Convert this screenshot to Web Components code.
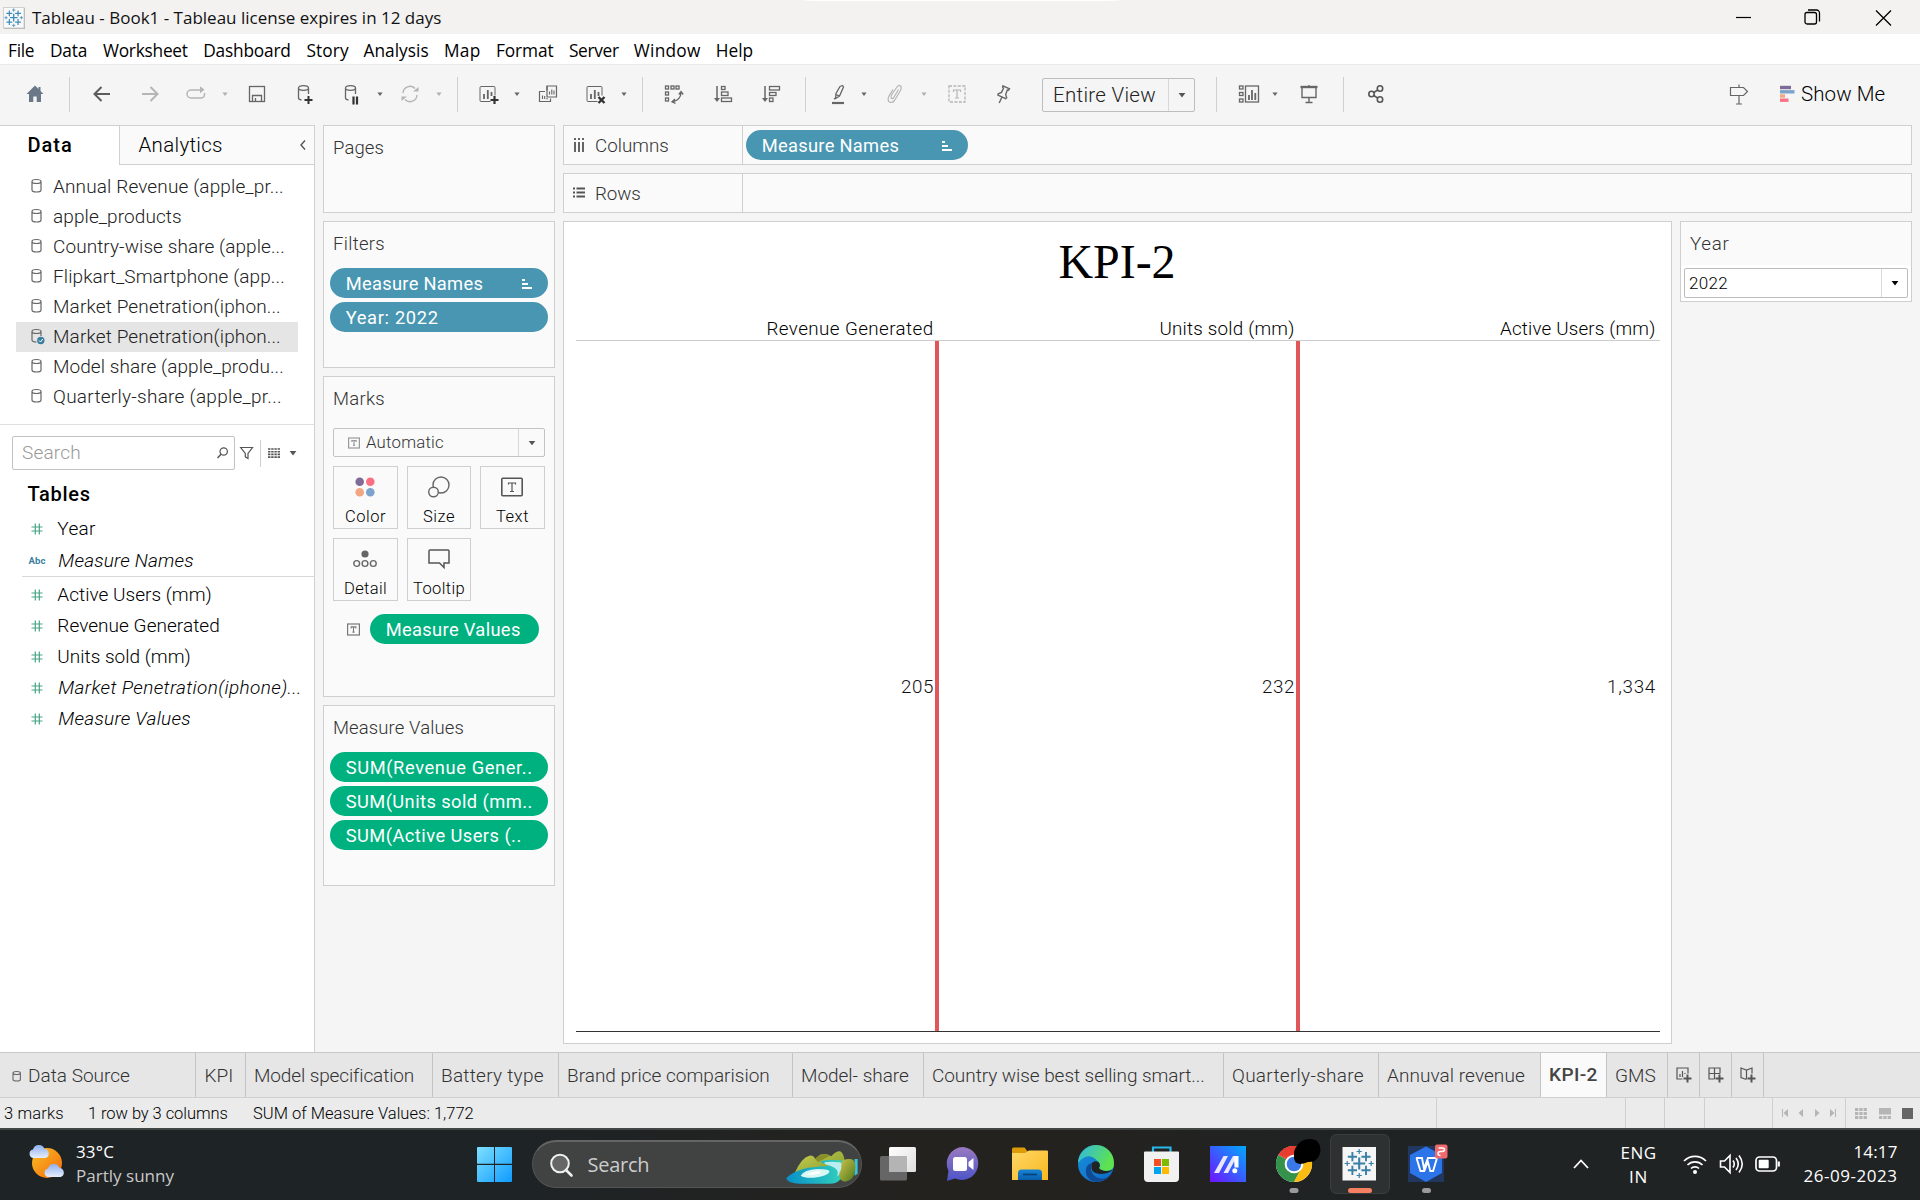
<!DOCTYPE html>
<html lang="en">
<head>
<meta charset="utf-8">
<title>Tableau - Book1</title>
<style>
html,body{margin:0;padding:0;width:1920px;height:1200px;overflow:hidden;background:#f5f5f5}
</style>
</head>
<body>
<tableau-app></tableau-app>
<script>
const texts = new Set();

/* Text run whose letter spacing is tuned so that it fills a given width. */
class UiText extends HTMLElement {
  constructor() {
    super();
    this.attachShadow({mode: 'open'}).innerHTML =
      '<style>:host{display:block;white-space:nowrap;line-height:1.2}span{display:inline-block;white-space:pre}</style><span><slot></slot></span>';
  }
  connectedCallback() { texts.add(this); }
  fit() {
    const w = parseFloat(this.getAttribute('w'));
    if (!w) return;
    this.style.width = w + 'px';
    const span = this.shadowRoot.querySelector('span');
    const n = this.textContent.length;
    const natural = span.getBoundingClientRect().width;
    this.style.letterSpacing = ((w + 1 - natural) / n).toFixed(3) + 'px';
  }
}
customElements.define('ui-text', UiText);

function define(name, css, html) {
  const tpl = document.createElement('template');
  tpl.innerHTML = '<style>*{box-sizing:border-box}:host{display:block;box-sizing:border-box}.row{display:flex;align-items:center}.row>*{flex:none}svg{display:block;overflow:visible}' + css + '</style>' + html;
  customElements.define(name, class extends HTMLElement {
    constructor() {
      super();
      this.attachShadow({mode: 'open'}).appendChild(tpl.content.cloneNode(true));
    }
  });
}

/* Row helpers: each item is [left, width, html]; the gap before it becomes its margin. */
const row = (items, start = 0) => {
  let cur = start;
  return items.map(([x, w, h, st = '']) => {
    const m = x - cur; cur = x + w;
    return `<div style="margin-left:${m.toFixed(2)}px;width:${w}px;${st}">${h}</div>`;
  }).join('');
};
const t = (x, x2, s, st = '') => [x - .5, x2 - x + .3, `<ui-text w="${(x2 - x + .3).toFixed(1)}">${s}</ui-text>`, st];
const svg = (w, h, body, extra = '') => `<svg width="${w}" height="${h}" viewBox="0 0 ${w} ${h}" fill="none" ${extra}>${body}</svg>`;
const ic = (cx, body, color = '#666', w = 24, st = '') => [cx - w / 2, w, svg(w, 24, body, `stroke="${color}"`), st];
const caret = (cx, c = '#666', s = 2.6, st = '') => [cx - 4, 8, svg(8, 8, `<path d="M${4 - s} ${4 - s / 2 - .3}h${2 * s}l${-s} ${s + 1}z" fill="${c}"/>`), st];
const sep = (x, h = 35, c = '#cfcfcf') => [x, 1, `<div style="height:${h}px;background:${c}"></div>`];

const plus = (x, y, r, w, c) => `<path d="M${x - r} ${y}h${2 * r}M${x} ${y - r}v${2 * r}" stroke="${c}" stroke-width="${w}"/>`;
const tableau = (cx, cy, k, c) => plus(cx, cy, 6 * k, 2.1 * k, c) +
  [[-1, -1], [1, -1], [-1, 1], [1, 1]].map(([a, b]) => plus(cx + a * 6.8 * k, cy + b * 6.8 * k, 4.6 * k, 1.9 * k, c)).join('') +
  [[0, -1], [0, 1], [-1, 0], [1, 0]].map(([a, b]) => plus(cx + a * 12 * k, cy + b * 12 * k, 2.6 * k, 1.2 * k, c)).join('');

/* ---------- title bar and menu ---------- */
define('title-bar', `:host{height:34px;background:linear-gradient(90deg,transparent 800px,#fff 812px,#fff 1110px,transparent 1125px) 0 0/100% 1px no-repeat,#f3f2f1;font:17px "Open Sans",sans-serif;color:#111}.row{height:34px;padding-top:1px}`,
  `<div class="row">` + row([
    [3, 22, svg(22, 22, `<rect x="1" y="1" width="21" height="21" fill="#aaa" stroke="none"/><rect x=".5" y=".5" width="20.5" height="20.5" fill="#fafafa" stroke="#d0d0d0"/>` + tableau(10.7, 10.7, .64, '#3d8cba'))],
    t(32.5, 440.5, 'Tableau - Book1 - Tableau license expires in 12 days', 'padding-top:1px'),
    [1735, 17, svg(17, 24, '<path d="M1 11.5h15" stroke="#000" stroke-width="1.2"/>')],
    [1804, 17, svg(17, 24, '<rect x="1" y="6.5" width="11.5" height="11.5" rx="2" stroke="#000" stroke-width="1.3"/><path d="M4 4h8.5a3 3 0 0 1 3 3v8.5" stroke="#000" stroke-width="1.3"/>')],
    [1875, 17, svg(17, 24, '<path d="M1 4.5l15 15M16 4.5l-15 15" stroke="#000" stroke-width="1.3"/>')],
  ]) + `</div>`);

define('menu-bar', `:host{height:30px;background:#fff;font:17.3px "Open Sans",sans-serif;color:#000}.row{height:35px}`,
  `<div class="row">` + row([
    t(8.5, 33.5, 'File'), t(50.5, 86.5, 'Data'), t(103.5, 187, 'Worksheet'), t(203.7, 290, 'Dashboard'), t(307, 348, 'Story'),
    t(364, 428, 'Analysis'), t(444.5, 480, 'Map'), t(496.5, 553, 'Format'), t(569.5, 618, 'Server'), t(634.5, 700, 'Window'), t(716.500, 752.500, 'Help')
  ]) + `</div>`);

/* ---------- toolbar ---------- */
const dbase = '<path d="M6.5 6v10q0 1.6 3 2M16.5 6v6M6.5 6q0-2.3 5-2.3t5 2.3-5 2.3-5-2.3z"/>';
const sheetBars = '<path d="M14.5 19.5h-9.500a1 1 0 0 1-1-1v-13a1 1 0 0 1 1-1h13a1 1 0 0 1 1 1v8"/><path d="M8 17v-5M11.800 17v-9M15.500 14v-4" stroke-width="1.8"/>';
define('tool-bar', `:host{height:61px;background:#f5f5f5;border-top:1px solid #e9e9e9;font:300 20.5px Roboto,sans-serif;color:#222}.row{height:58px}.sel{display:flex;height:34px;margin-top:1px;border:1px solid #bdbdbd;border-radius:2px;align-items:center}.sel>*{flex:none}`,
  `<div class="row">` + row([
    ic(35, '<path d="M12 3.500L3.500 12H6v8h4.300v-5.500h3.400V20H18v-8h2.500l-3-3V5h-2v2z" fill="#6b7888" stroke="none"/>'),
    sep(69),
    ic(102, '<path d="M20 12H5M11.500 5L4.500 12l7 7" stroke-width="2"/>', '#5c5c5c'),
    ic(150, '<path d="M4 12h15M12.500 5l7 7-7 7" stroke-width="2"/>', '#b5b5b5'),
    ic(196, '<path d="M15 8H7a4 4 0 0 0 0 8h10a3.500 3.500 0 0 0 3.500-3.500v-1.500M14 8h4" stroke-width="1.500"/><path d="M16 4.300v7l4.500-3.500z" fill="#b5b5b5" stroke="none"/>', '#b5b5b5'),
    caret(225, '#b0b0b0'),
    ic(257, '<rect x="4.500" y="4.500" width="15" height="15" stroke-width="1.300"/><path d="M7.500 19.500v-6h9v6M10.500 19v-3" stroke-width="1.300"/>'),
    ic(304, '<g stroke-width="1.300">' + dbase + '</g><path d="M16.500 14v8M12.500 18h8" stroke="#333" stroke-width="2"/>'),
    ic(351, '<g stroke-width="1.300">' + dbase + '</g><path d="M14.500 14.500v8M18 14.500v8" stroke="#333" stroke-width="2.200"/>'),
    caret(380),
    ic(409.5, '<path d="M5 11a7 7 0 0 1 12-4.500M19 13a7 7 0 0 1-12 4.500" stroke-width="1.400"/><path d="M15 9.500h5.500V5zM9 14.500H3.500V19z" fill="#b5b5b5" stroke="none"/>', '#b5b5b5'),
    caret(439, '#b0b0b0'),
    sep(457),
    ic(487.5, sheetBars + '<path d="M18.500 14v8M14.500 18h8" stroke="#333" stroke-width="2.200"/>'),
    caret(517),
    ic(548, '<path d="M11 8.500V4h9.500v11H16" stroke-width="1.200"/><path d="M11 4v11h5M9 9.500H3.500v10h11v-3" stroke-width="1.200"/><path d="M13.500 12.500v-3M15.800 12.500v-5M18 12.500V8.500M6.500 17v-3.500M8.700 17v-3M11 17.500v-1.500" stroke-width="1.100"/>'),
    ic(594.5, sheetBars + '<path d="M15.500 15l6 6M21.500 15l-6 6" stroke="#333" stroke-width="2.400"/>'),
    caret(624),
    sep(642),
    ic(674, '<g stroke-width="1.300"><rect x="3.500" y="4" width="3" height="3"/><rect x="9" y="4" width="3" height="3"/><rect x="14" y="4" width="3" height="3"/><rect x="3.500" y="10" width="3" height="3"/><rect x="3.500" y="16" width="3" height="3"/><path d="M19 11q-.5 7-8 8.500M16.800 12.500l2.200-3 2.200 3M13 17l-3 2.800 3.500 1.500"/></g>'),
    ic(723, '<path d="M6 4v14" stroke-width="1.500"/><path d="M3 16h6l-3 4z" fill="#666" stroke="none"/><g stroke-width="1.300"><rect x="10.500" y="4.500" width="3.500" height="3"/><rect x="10.500" y="10" width="6.500" height="3.500"/><rect x="10.500" y="16" width="10" height="3.500"/></g>'),
    ic(771, '<path d="M6 4v14" stroke-width="1.500"/><path d="M3 16h6l-3 4z" fill="#666" stroke="none"/><g stroke-width="1.300"><rect x="10.500" y="4.500" width="10" height="3.500"/><rect x="10.500" y="10.500" width="6.500" height="3"/><rect x="10.500" y="16" width="3.500" height="3.500"/></g>'),
    sep(805),
    ic(838, '<path d="M14 4.500l2.500-1 1 1.500-4 9-4 2.500.5-5zM9.800 12.500l3.200 1.300M8 17l1.500-1" stroke-width="1.300"/><path d="M6 21h12" stroke-width="2.200"/>'),
    caret(863.5),
    ic(895, '<path d="M15.500 7.500l-5 8.500q-1.500 1.500-2.300 0t.8-4L14 5q2-2.500 3.500-1t0 4.500l-6 10q-2.500 3-5 1.500t-.5-6l4-6.500" stroke-width="1.200"/>', '#b5b5b5'),
    caret(923.5, '#b0b0b0'),
    ic(957, '<rect x="4" y="4" width="16" height="16" stroke-width="1.300" stroke-dasharray="3 1.400"/><path d="M8.500 10V8h7v2M12 8v8M10 16h4" stroke-width="1.200"/>', '#b5b5b5'),
    ic(1003, '<path d="M12 3.800l6.500 3-1 1.500-1.200-.2-1.600 4.500 1 3.200-1 .9-7.800-3.600.3-1.300 3.300-1.400 2-4.300-.9-1zM11 15l-2.800 6" stroke-width="1.400"/>'),
    [1042, 153, `<div class="sel"><div style="margin-left:10px;padding-top:1px;width:104px"><ui-text w="102">Entire View</ui-text></div><div style="margin-left:11px;width:1px;height:32px;background:#d8d8d8"></div><div style="margin-left:8.500px">${caret(0, '#555', 3.4)[2]}</div></div>`],
    sep(1216),
    ic(1249, '<g stroke-width="1.300"><rect x="2.500" y="4" width="3.500" height="3"/><rect x="2.500" y="10.500" width="3.500" height="3"/><rect x="2.500" y="17" width="3.500" height="3"/><rect x="8.500" y="4" width="13" height="16"/></g><path d="M12 18v-5M15 18V8M18.300 18v-7" stroke-width="1.800"/>'),
    caret(1274.5),
    ic(1308.5, '<path d="M3.500 5h17" stroke-width="2.400"/><path d="M5 6v9.500h14V6M12 15.500V20M8.500 20.500h7M12 3v2" stroke-width="1.400"/>'),
    sep(1343),
    ic(1376, '<g stroke-width="1.600" stroke="#555"><circle cx="7.500" cy="12" r="2.700"/><circle cx="16" cy="6.500" r="2.700"/><circle cx="16" cy="17.500" r="2.700"/><path d="M9.800 10.500l4-2.600M9.800 13.500l4 2.600"/></g>'),
    ic(1738.5, '<path d="M3.500 5.500h13l4 4-4 4h-13zM12 2.500v3M12 13.500V22M9 22h6" stroke-width="1.200"/>'),
    [1780, 15, svg(15, 24, '<path d="M0 5.500h11" stroke="#7b6b96" stroke-width="3.400"/><path d="M0 9.800h14.500" stroke="#7ba3cc" stroke-width="3.400"/><path d="M0 14h5" stroke="#f4a582" stroke-width="3.400"/><path d="M0 18.200h8.500" stroke="#fb7185" stroke-width="3.400"/>')],
    t(1801.5, 1884.5, 'Show Me', 'color:#000'),
  ]) + `</div>`);

/* ---------- data pane ---------- */
const cyl = (c = '#666') => `<path d="M1 3.500v8.500q0 2 4.500 2t4.500-2V3.500M1 3.500q0-2 4.500-2t4.500 2-4.500 2-4.500-2z" stroke="${c}" stroke-width="1.200"/>`;
const src = (x2, s, sel) => `<div class="row src ${sel ? 'on' : ''}">` + row([
  [31, 12, svg(12, 15, sel ? '<path d="M5.500 14Q1 14 1 12V3.500M10 3.500V8M1 3.500q0-2 4.500-2t4.500 2-4.500 2-4.500-2z" stroke="#666" stroke-width="1.200"/><circle cx="9.800" cy="12.500" r="3.700" fill="#3a7fa0"/><path d="M8 12.500l1.500 1.500 2.300-3" stroke="#fff"/>' : cyl()), 'padding-bottom:3px'],
  t(53.5, x2, s, 'padding-top:1px')], 16) + '</div>';
const hash = svg(12, 12, '<path d="M4.300 .5v11M8.300 .5v11M.5 4h11M.5 8h11" stroke="#45a586" stroke-width="1.200"/>');
const fld = (h, x2, s, it, abc) => `<div class="row" style="height:${h}px">` + row([
  abc ? [28.5, 17, '<ui-text w="16" style="font:bold 9.500px Roboto,sans-serif;color:#3a7fa0">Abc</ui-text>'] : [31, 12, hash],
  t(it ? 58.8 : 57.8, x2, s, 'padding-top:1px;' + (it ? 'font-style:italic' : ''))]) + '</div>';
define('data-pane', `:host{width:315px;height:927px;background:#fff;border-top:1px solid #d0d0d0;border-right:1px solid #d0d0d0;font:300 19px Roboto,sans-serif;color:#222}
.tabs{display:flex;height:39px}.a{width:119px;height:38px;font:500 20px Roboto,sans-serif;color:#000}.b{width:195px;background:#fafafa;border-left:1px solid #d0d0d0;border-bottom:1px solid #d0d0d0;font-size:20.5px;color:#000}
.list{padding:7px 16px 0;height:260px;border-bottom:1px solid #e0e0e0}.src{height:30px;width:282px}.on{background:#e5e5e5}
.box{display:flex;align-items:center;height:34px;border:1px solid #c3c3c3;border-radius:2px}.fields{color:#000}.hr{height:1px;background:#d8d8d8;margin-left:22px}`,
`<div class="tabs"><div class="row a">${row([t(28, 72, 'Data')])}</div><div class="row b">${row([t(139, 222, 'Analytics'), [299, 8, svg(8, 12, '<path d="M6 1.500L2 6l4 4.500" stroke="#555" stroke-width="1.400"/>')]], 120)}</div></div>
<div class="list">${src(283, 'Annual Revenue (apple_pr...')}${src(181, 'apple_products')}${src(284, 'Country-wise share (apple...')}${src(284, 'Flipkart_Smartphone (app...')}${src(280, 'Market Penetration(iphon...')}${src(280, 'Market Penetration(iphon...', 1)}${src(283, 'Model share (apple_produ...')}${src(281, 'Quarterly-share (apple_pr...')}</div>
<div class="row" style="height:34px;margin-top:11px">${row([
  [12, 223, `<div class="box">${row([t(22.6, 80, 'Search', 'color:#999'), [216, 13, svg(13, 12, '<circle cx="7.700" cy="4.500" r="3.700" stroke="#555" stroke-width="1.200"/><path d="M5 7.200L1.500 11" stroke="#555" stroke-width="1.400"/>')]], 13)}</div>`],
  [240, 13, svg(13, 14, '<path d="M.7 1.500h11.800L8 7.500v5l-2.700-1.700V7.500z" stroke="#555" stroke-width="1.200"/>')],
  sep(260, 27),
  [268, 12, svg(12, 12, '<path d="M0 1h12M0 3.700h12M0 6.400h12M0 9.100h12" stroke="#555" stroke-width="1.600" stroke-dasharray="2.400 .8"/>'), 'padding-top:1px'],
  caret(293, '#555', 3.4)])}</div>
<div class="row" style="height:32px;margin-top:8px;font-weight:500;color:#000;font-size:20px">${row([t(28, 90, 'Tables')])}</div>
<div class="fields"><div style="height:3px"></div>${fld(32, 95, 'Year')}${fld(31, 193, 'Measure Names', 1, 1)}<div class="hr"></div><div style="height:2px"></div>${fld(31, 211, 'Active Users (mm)')}${fld(31, 219, 'Revenue Generated')}${fld(31, 190, 'Units sold (mm)')}${fld(31, 301, 'Market Penetration(iphone)...', 1)}${fld(31, 190, 'Measure Values', 1)}</div>`);

/* ---------- pill and cards ---------- */
define('field-pill', `:host{height:30px;border-radius:15px;color:#fff;font:400 18.3px Roboto,sans-serif;background:var(--pill,#4996b2);display:flex;align-items:center;justify-content:space-between;padding:1px 16px 0 15.700px}svg{display:none}:host([sorted]) svg{display:block}`,
  `<slot></slot>` + svg(10, 10, '<path d="M0 1h3M0 5h6M0 9h10" stroke="#fff" stroke-width="2"/>'));
const tbox = (s, c = '#777') => svg(s, s, `<rect x=".6" y="1" width="${s - 1.2}" height="${s - 2}" stroke="${c}" stroke-width="1.200"/><path d="M${s * .32} ${s * .42}v-${s * .12}h${s * .36}v${s * .12}M${s / 2} ${s * .3}v${s * .4}M${s * .42} ${s * .7}h${s * .16}" stroke="${c}" stroke-width="1.100"/>`);
const btn = (w, lw, label, icon) => `<div class="btn" style="width:${w}px"><div class="i">${icon}</div><ui-text w="${lw}">${label}</ui-text></div>`;
define('shelf-cards', `:host{display:flex;flex-direction:column;gap:8px;width:232px;font:300 18.5px Roboto,sans-serif;color:#333}
.card{border:1px solid #cfcfcf;background:#fafafa;padding:0 6px;flex:none}.h{height:46px;padding:11px 0 0 3px}.pills{display:flex;flex-direction:column;gap:4px}
.green{--pill:#00b180}.sel{display:flex;align-items:center;height:29px;width:212px;margin:5px 0 9px 3px;border:1px solid #c3c3c3;border-radius:2px;font-size:16.800px}.sel>*{flex:none}
.btns{display:flex;gap:9px;margin:0 0 9px 3px}.btn{height:63px;border:1px solid #cfcfcf;display:flex;flex-direction:column;align-items:center;font-size:16.500px;color:#000;padding-right:1px}.i{height:40px;padding-bottom:1px;display:flex;align-items:center;justify-content:center}`,
`<div class="card" style="height:88px"><div class="h"><ui-text w="50">Pages</ui-text></div></div>
<div class="card" style="height:147px"><div class="h"><ui-text w="51">Filters</ui-text></div><div class="pills"><field-pill sorted><ui-text w="136.500">Measure Names</ui-text></field-pill><field-pill><ui-text w="92">Year: 2022</ui-text></field-pill></div></div>
<div class="card" style="height:321px"><div class="h"><ui-text w="51">Marks</ui-text></div>
<div class="sel"><div style="margin:0 6px 0 14px">${tbox(12, '#999')}</div><ui-text w="77">Automatic</ui-text><div style="margin-left:75px;width:1px;height:27px;background:#d8d8d8"></div><div style="margin-left:8.500px">${caret(0, '#555', 3.3)[2]}</div></div>
<div class="btns">${btn(65, 40, 'Color', svg(20, 20, '<circle cx="4.700" cy="4.700" r="4.300" fill="#7f6b96"/><circle cx="15.300" cy="4.700" r="4.300" fill="#fb6f82"/><circle cx="4.700" cy="15.300" r="4.300" fill="#f4a582"/><circle cx="15.300" cy="15.300" r="4.300" fill="#7ba3cc"/>'))}${btn(64, 31, 'Size', svg(22, 22, '<circle cx="13" cy="9" r="8" stroke="#666" stroke-width="1.400"/><circle cx="5.500" cy="16" r="4.800" fill="#fafafa" stroke="#666" stroke-width="1.400"/>'))}${btn(65, 32, 'Text', svg(22, 20, '<rect x=".8" y="1.300" width="20.400" height="17.400" rx="1" stroke="#555" stroke-width="1.600"/><path d="M7.500 7.500V6h7v1.500M11 6v8.500M9 14.500h4" stroke="#555" stroke-width="1.200"/>'))}</div>
<div class="btns">${btn(65, 42, 'Detail', svg(24, 20, '<circle cx="12" cy="5" r="3.600" fill="#666"/><g stroke="#666" stroke-width="1.400"><circle cx="3.700" cy="14.500" r="2.900"/><circle cx="12" cy="14.500" r="2.900"/><circle cx="20.300" cy="14.500" r="2.900"/></g>'))}${btn(64, 51, 'Tooltip', svg(22, 20, '<path d="M2 1h18a1 1 0 0 1 1 1v12h-5v4.500L11.500 14H1V2a1 1 0 0 1 1-1z" stroke="#555" stroke-width="1.500"/>'))}</div>
<div class="row green" style="margin-top:13px">${row([[346.5, 13, tbox(13)], [370, 169, '<field-pill><ui-text w="134">Measure Values</ui-text></field-pill>']], 330)}</div></div>
<div class="card" style="height:181px"><div class="h"><ui-text w="130">Measure Values</ui-text></div><div class="pills green"><field-pill><ui-text w="186">SUM(Revenue Gener..</ui-text></field-pill><field-pill><ui-text w="186">SUM(Units sold (mm..</ui-text></field-pill><field-pill><ui-text w="175">SUM(Active Users (..</ui-text></field-pill></div></div>`);

/* ---------- shelves and view ---------- */
const hcell = (w, tw, s, red) => `<div class="cell" style="width:${w}px;${red}"><ui-text w="${tw}">${s}</ui-text></div>`;
define('work-sheet', `:host{width:1349px;font:300 18.800px Roboto,sans-serif;color:#333}
.shelf{display:flex;height:40px;border:1px solid #cfcfcf;background:#fafafa;margin-bottom:8px}.shelf>*{height:100%}.l{width:179px;border-right:1px solid #cfcfcf}
.main{display:flex;gap:8px;align-items:flex-start}.view{width:1109px;height:823px;background:#fff;border:1px solid #cfcfcf;padding:0 11px 0 12px}
h1{margin:0;height:85px;padding:12px 3px 0 0;display:flex;justify-content:center;font:400 48px "Liberation Serif",serif;color:#000;line-height:55px}
.heads{display:flex;height:34px;padding-top:12px;border-bottom:1px solid #ccc;color:#000;align-items:center}.vals{display:flex;height:691px;border-bottom:1px solid #333;color:#111}
.cell{display:flex;justify-content:flex-end;align-items:center;flex:none;height:100%}
.year{width:232px;height:81px;border:1px solid #cfcfcf;background:#fff}.yh{height:43px;background:#fafafa;padding:11px 0 0 9px}
.ys{display:flex;align-items:center;margin:3px 0 0 3px;width:224px;height:30px;border:1px solid #bdbdbd;border-radius:2px;color:#000;font-size:17px}.ys>*{flex:none}`,
`<div class="shelf"><div class="row l">${row([[573, 12, svg(12, 14, '<path d="M2 4v10M6 4v10M10 4v10M2 0v2M6 0v2M10 0v2" stroke="#555" stroke-width="1.800"/>'), 'padding-bottom:1px'], t(595.5, 668, 'Columns', 'padding-top:2px')], 564)}</div><div class="row">${row([[746, 222, '<field-pill sorted><ui-text w="136.500">Measure Names</ui-text></field-pill>']], 743)}</div></div>
<div class="shelf"><div class="row l">${row([[573, 12, svg(12, 14, '<path d="M3.500 2.500h8.500M3.500 6.500h8.500M3.500 10.500h8.500M0 2.500h2M0 6.500h2M0 10.500h2" stroke="#555" stroke-width="1.800"/>')], t(595.5, 640, 'Rows', 'padding-top:2px')], 564)}</div></div>
<div class="main"><div class="view"><h1><ui-text w="116" style="line-height:55px">KPI-2</ui-text></h1>
<div class="heads">${hcell(356.5, 166, 'Revenue Generated', '')}${hcell(361, 134, 'Units sold (mm)', '')}${hcell(361, 154.500, 'Active Users (mm)', '')}</div>
<div class="vals">${hcell(363, 32, '205', 'border-right:4px solid #e15759;padding:2px 2px 0 0')}${hcell(361, 32, '232', 'border-right:4px solid #e15759;padding:2px 2px 0 0')}${hcell(355, 48, '1,334', 'padding-top:2px')}</div></div>
<div class="year"><div class="yh"><ui-text w="38.500">Year</ui-text></div><div class="ys"><ui-text w="38" style="margin-left:4px">2022</ui-text><div style="margin-left:154px;width:1px;height:28px;background:#d8d8d8"></div><div style="margin-left:8.500px">${caret(0, '#000', 3.4)[2]}</div></div></div></div>`);

/* ---------- sheet tabs and status ---------- */
const tab = (x, x2, a, b, s, on) => [x, x2 - x, `<div class="tab ${on ? 'on' : ''}">${row([t(a, b, s)], x)}</div>`];
const add = (x, x2, body) => [x, x2 - x, `<div class="tab" style="padding:0 0 0 6px">${svg(20, 20, `<g stroke="#555" stroke-width="1.200">${body}<path d="M13.500 9.500v8M9.500 13.500h8" stroke-width="2"/></g>`)}</div>`];
define('sheet-tabs', `:host{height:46px;background:#e6e6e6;border-top:1px solid #c8c8c8;border-bottom:1px solid #cfcfcf;font:300 19px Roboto,sans-serif;color:#333}.tab{display:flex;align-items:center;height:44px;padding-top:2px;border-right:1px solid #c4c4c4}.tab>*{flex:none}.on{background:#fafafa;font-weight:500;color:#444;padding:0}`,
`<div class="row">${row([
  [0, 196, `<div class="tab">${row([[12, 10, svg(10, 13, '<path d="M1 3v6.500q0 1.500 3.700 1.500t3.700-1.500V3M1 3q0-1.500 3.700-1.500T8.400 3 4.700 4.500 1 3z" stroke="#666" stroke-width="1.100"/>')], t(28.6, 129, 'Data Source')])}</div>`],
  tab(196, 246, 205, 232.5, 'KPI'), tab(246, 433, 254.5, 413, 'Model specification'), tab(433, 559, 441.5, 543, 'Battery type'), tab(559, 793, 567.5, 769, 'Brand price comparision'),
  tab(793, 924, 801.5, 908, 'Model- share'), tab(924, 1224, 932.5, 1204, 'Country wise best selling smart...'), tab(1224, 1379, 1232.5, 1363, 'Quarterly-share'),
  tab(1379, 1541, 1387.5, 1524, 'Annuval revenue'), tab(1541, 1607, 1549.5, 1597, 'KPI-2', 1), tab(1607, 1668, 1615.5, 1655, 'GMS'),
  add(1668, 1700, '<path d="M8.500 14H3V3h11v5.500M6 12v-3M8.500 12V6M11 9V8"/>'), add(1700, 1732, '<path d="M8.500 14H3V3h11v5.500M8.500 3v11M3 8.500h11"/>'), add(1732, 1764, '<path d="M8.500 14.500L3 12.500V3l5.500 2L14 3v5.500M8.500 5v9"/>')])}</div>`);
const G = '#b5b5b5';
define('status-bar', `:host{height:30px;background:#ebebeb;font:300 16.500px Roboto,sans-serif;color:#000}.row{height:30px}`,
`<div class="row">${row([
  t(4.5, 63, '3 marks', 'padding-top:1px'), t(88.5, 227, '1 row by 3 columns', 'padding-top:1px'), t(253.5, 473, 'SUM of Measure Values: 1,772', 'padding-top:1px'),
  sep(1436, 30), sep(1625, 30), sep(1664, 30), sep(1704, 30), sep(1772, 30),
  [1781, 8, svg(8, 8, `<path d="M7 0v8L2.500 4z" fill="${G}"/><path d="M1.500 0v8" stroke="${G}"/>`)], [1797, 8, svg(8, 8, `<path d="M6 0v8L1.500 4z" fill="${G}"/>`)],
  [1813, 8, svg(8, 8, `<path d="M2 0v8L6.500 4z" fill="${G}"/>`)], [1829, 8, svg(8, 8, `<path d="M1 0v8L5.500 4z" fill="${G}"/><path d="M6.500 0v8" stroke="${G}"/>`)],
  sep(1845, 30),
  [1855, 12, svg(12, 11, `<path d="M0 1.500h12M0 5.500h12M0 9.500h12" stroke="${G}" stroke-width="3" stroke-dasharray="3.300 1"/>`)],
  [1879, 12, svg(12, 11, `<path d="M0 0h12v6.500H0z" fill="${G}"/><path d="M0 9.500h12" stroke="${G}" stroke-width="3" stroke-dasharray="3.300 1"/>`)],
  [1902, 11, svg(11, 11, '<path d="M0 0h11v11H0z" fill="#666"/>')]])}</div>`);

/* ---------- taskbar ---------- */
const lg = (id, a, b, v = 'x2="1" y2="1"') => `<linearGradient id="${id}" x1="0" y1="0" ${v}><stop stop-color="${a}"/><stop offset="1" stop-color="${b}"/></linearGradient>`;
const cloud = (x, y) => `<path transform="translate(${x} ${y})" d="M4.500 14a4.300 4.300 0 0 1-.5-8.500A6 6 0 0 1 15.500 5a4.600 4.600 0 0 1 1 9z" fill="url(#cl)"/>`;
const weather = svg(36, 36, `<defs>${lg('su', '#fbbf24', '#f2690d')}${lg('cl', '#8fb0f0', '#e6eefc', 'x2="0" y2="1"')}</defs><circle cx="18" cy="19" r="15" fill="url(#su)"/>${cloud(0, 0)}${cloud(15, 19)}`);
const win = svg(35, 35, `<defs>${lg('wn', '#7fe0ff', '#0e9bff')}</defs><path d="M1 0h16v16.700H0V1q0-1 1-1zM18 0h16q1 0 1 1v15.700H18zM0 18h17v17H1q-1 0-1-1zM18 18h17v16q0 1-1 1H18z" fill="url(#wn)"/>`);
const hills = `<svg width="72.300" height="33.300" viewBox="0 0 217 100"><defs>${lg('hl', '#c9cf52', '#7b9426')}${lg('rv', '#0891c9', '#36d6bb', 'x2="1" y2="0"')}${lg('hr', '#d0c24a', '#4c7a1c')}</defs>
<path d="M26 66Q46 20 70 14q12-2 18 10 20-26 48-8Q150 0 162 1q10 4 14 26l10 30-80 20z" fill="url(#hl)"/><path d="M88 24q18-24 44-10L96 34z" fill="#8b8f2a"/>
<path d="M206 24h9v44l-9 6z" fill="#39c5df"/><path d="M0 82Q20 60 66 50q40-4 62-6 4-4-14-6-14-4 -8-8 20-4 50-2l32 2v46l-26 10q-10 12-30 12H40Q8 98 0 82z" fill="url(#rv)"/>
<path d="M44 74q10-18 50-20 40 0 36 10-6 12-46 16-28 2-40-6z" fill="#d9f7f4"/><path d="M116 34q20-4 44 0 18 4 16 14-4 16-22 28 4-16-4-22-8-8-26-12-12-4-8-8z" fill="#b8eef2"/><path d="M62 70q20-12 44-8-10 12-44 8z" fill="#fff"/>
<path d="M160 66q8-10 6-30 6-14 28-12 16 2 14 30-2 34-30 38-20 0-18-26z" fill="url(#hr)"/></svg>`;
const taskview = svg(36, 34, `<defs>${lg('tv', '#fff', '#dedede')}</defs><rect y="9" width="27" height="24.500" rx="1.500" fill="#666"/><rect x="9" width="27" height="25" rx="1.500" fill="url(#tv)"/><path d="M9 9h18v16H9z" fill="#b4b4b4"/>`);
const chat = svg(34, 36, `<defs>${lg('ch', '#9a7ac0', '#4c54c8', 'x2="0" y2="1"')}</defs><path d="M17 1a16.500 16.500 0 1 1-8 31.500L1 35l1.500-10A16.500 16.500 0 0 1 17 1z" fill="url(#ch)"/><rect x="7" y="11" width="14" height="14" rx="2.500" fill="#fff"/><path d="M22.500 16l5-4v12l-5-4z" fill="#fff"/>`);
const folder = svg(36, 34, `<defs>${lg('fo', '#ffd767', '#f9b81f')}${lg('fb', '#1784d4', '#0a5fae', 'x2="0" y2="1"')}</defs><path d="M0 2q0-1.500 1.500-1.500h11L16 5v3H0z" fill="#dd9b08"/><path d="M0 6h13l4-2.500h18a1 1 0 0 1 1 1V33H0z" fill="url(#fo)"/><path d="M6 33v-7q0-3.500 3.500-3.500h17Q30 22.500 30 26v7z" fill="url(#fb)"/><path d="M11 27.500h14" stroke="#07437e" stroke-width="1.800"/>`);
const edge = svg(36, 36, `<defs>${lg('e1', '#2fb7e8', '#5fe34c', 'x2="1" y2=".4"')}${lg('e2', '#1a8fdb', '#0b69c7')}</defs><circle cx="18" cy="18" r="18" fill="url(#e2)"/><path d="M0 17A18 18 0 0 1 36 17q.5 8-8 8-6-.5-7-3 2-3-.5-6Q10 4 0 17z" fill="url(#e1)"/><path d="M14 17q-4 9 5 14.500 8 3.500 14-3.500-5 8-15 8Q7 34 8 23q1-5 6-6z" fill="#114a94"/><path d="M21 22q2-3-.5-6-4-2-6.500 1-3 10 8 11 7 0 11.500-3l3-4q-1 4-8 4-6-.5-7.500-3z" fill="#1f2324"/>`);
const store = svg(35, 36, `<path d="M9 7V1.500h17.500V7" stroke="#29b6e8" stroke-width="2.200"/><path d="M0 6.500q0-1 1-1h33q1 0 1 1V32q0 4-4 4H4q-4 0-4-4z" fill="#f1f1f1"/><path d="M10 13h7v7h-7z" fill="#f25022"/><path d="M18 13h7v7h-7z" fill="#7fba00"/><path d="M10 21h7v7h-7z" fill="#00a4ef"/><path d="M18 21h7v7h-7z" fill="#ffb900"/>`);
const asus = svg(36, 36, `<defs><linearGradient id="as" x1="0" y1="1" x2="1" y2="0"><stop stop-color="#7012ff"/><stop offset="1" stop-color="#00aaff"/></linearGradient></defs><path d="M0 0h36v36H0z" fill="url(#as)"/><path d="M4 27l9.500-17H18L9 27zM13.500 27L23 10h4L18 27z" fill="#e9e7ff"/><path d="M24 10h4.500v11.500h-4z" fill="#fff"/><circle cx="24.800" cy="24.800" r="2.500" fill="#fff"/>`);
const chrome = svg(48, 72, `<g transform="translate(24 36)"><circle r="18" fill="#fff"/><path d="M0 0L-15.600-9A18 18 0 0 1 15.600-9z" fill="#ea4335"/><path d="M0 0L-15.600-9A18 18 0 0 0 0 18L7.800 4.500z" fill="#34924b"/><path d="M0 18L9 0 7-9h8.600A18 18 0 0 1 0 18z" fill="#fbbc12"/><path d="M-15.600-9L0-8.500 15.600-9A18 18 0 0 0-15.600-9z" fill="#e63d30"/><circle r="9.300" fill="#fff"/><circle r="7.300" fill="#3b78e7"/><path d="M1.500-16Q6-25 16-25t10.500 11Q25-1.500 14-2-1 4 0-9q-.5-4 1.500-7z" fill="#000"/></g><rect x="19.500" y="60" width="9" height="5" rx="2.500" fill="#9a9a9a"/>`);
const tabl = svg(60, 72, `<rect x=".5" y="6.500" width="59" height="59" rx="6" fill="#2d3132" stroke="#3a3e3f"/><rect x="12.500" y="19" width="33.500" height="33.500" fill="#f5f5f5"/>` + tableau(29.2, 35.500, 1, '#3a7fa8') + `<rect x="18" y="60" width="24" height="5" rx="2.500" fill="#f47f63"/>`);
const wps = svg(42, 72, `<path d="M0 18h36v36H0z" fill="#22375f"/><path d="M18 18.500l16 8.500v18l-16 9-16-9V27z" fill="#2b74ea"/><path d="M8 30h6l2 10.500L20 30h9M8.500 30l4 13h3.800l3.500-9.500 2.500 9.500h2.800l3.900-13" stroke="#fff" stroke-width="1.900"/><rect x="27" y="16.500" width="12.500" height="14" rx="2" fill="#ee6a6c"/><path d="M30.500 20h3.500q2.500 0 2.500 1.700t-2.500 1.800h-1.500q-2.500 0-2.500 2t2.500 2" stroke="#fff" stroke-width="1.500"/><rect x="14" y="60" width="9" height="5" rx="2.500" fill="#9a9a9a"/>`);
define('task-bar', `:host{height:72px;background:linear-gradient(90deg,#1e2325 0,#1e2325 520px,#24221f 900px,#24221f 1080px,#1f2324 1350px);box-shadow:inset 0 2px #424746;font:17px "Open Sans",sans-serif;color:#fff}.row{height:72px}
.pill{display:flex;align-items:center;height:48px;border-radius:24px;background:#414242;border:1px solid #535454;border-top:2px solid #646564;font-size:20px;color:#ccc}.pill>*{flex:none}.two{display:flex;flex-direction:column;gap:3px;align-items:flex-end}`,
`<div class="row">${row([
  [29, 36, weather, 'margin-top:-4px'],
  [76, 110, '<div class="two" style="align-items:flex-start"><ui-text w="37">33°C</ui-text><ui-text w="97" style="color:#c9c9c9">Partly sunny</ui-text></div>'],
  [477, 35, win],
  [532, 330, `<div class="pill">${row([
    [549, 24, svg(24, 24, '<circle cx="11" cy="10.500" r="8.800" stroke="#f0f0f0" stroke-width="2" fill="#666"/><path d="M17 17l5.500 5.500" stroke="#f0f0f0" stroke-width="2.600" stroke-linecap="round"/>')],
    t(588, 648.5, 'Search'), [786, 73, hills, 'padding-top:6px']], 533)}</div>`],
  [880, 36, taskview], [946, 34, chat], [1012, 36, folder], [1078, 36, edge], [1144, 35, store], [1210, 36, asus], [1270, 48, chrome], [1330, 60, tabl], [1408, 42, wps],
  [1572, 18, svg(18, 12, '<path d="M2 10l7-7.500 7 7.500" stroke="#fff" stroke-width="1.800"/>')],
  [1619.5, 37, '<div class="two" style="align-items:center"><ui-text w="35">ENG</ui-text><ui-text w="18">IN</ui-text></div>', 'padding-top:2px'],
  [1683, 24, svg(24, 24, '<g stroke="#fff" stroke-width="1.700"><path d="M1 9a15.500 15.500 0 0 1 22 0M4.500 13a10.500 10.500 0 0 1 15 0M8 16.500a5.700 5.700 0 0 1 8 0"/></g><circle cx="12" cy="20" r="2" fill="#fff"/>')],
  [1719, 24, svg(24, 24, '<g stroke="#fff" stroke-width="1.600"><path d="M1.500 9h4L11 3.500v17L5.500 15h-4zM14 8.500q2.500 3.500 0 7M17 6q4.500 6 0 12M20 3.500q6.500 8.500 0 17"/></g>')],
  [1755, 26, svg(26, 24, '<rect x="1" y="5" width="20.500" height="14" rx="3.500" stroke="#fff" stroke-width="1.700"/><rect x="3.700" y="7.700" width="10" height="8.600" rx="1" fill="#fff"/><path d="M23.800 9.500v5" stroke="#fff" stroke-width="2.200"/>')],
  [1796.5, 100, '<div class="two"><ui-text w="43">14:17</ui-text><ui-text w="93">26-09-2023</ui-text></div>']])}</div>`);

define('tableau-app', `:host{width:1920px;height:1200px;background:#f5f5f5}.work{display:flex;height:927px}shelf-cards{margin-left:8px}work-sheet{margin-left:8px}`,
`<title-bar></title-bar><menu-bar></menu-bar><tool-bar></tool-bar><div class="work"><data-pane></data-pane><shelf-cards></shelf-cards><work-sheet></work-sheet></div><sheet-tabs></sheet-tabs><status-bar></status-bar><task-bar></task-bar>`);

texts.forEach(e => e.fit());
</script>
</body>
</html>
